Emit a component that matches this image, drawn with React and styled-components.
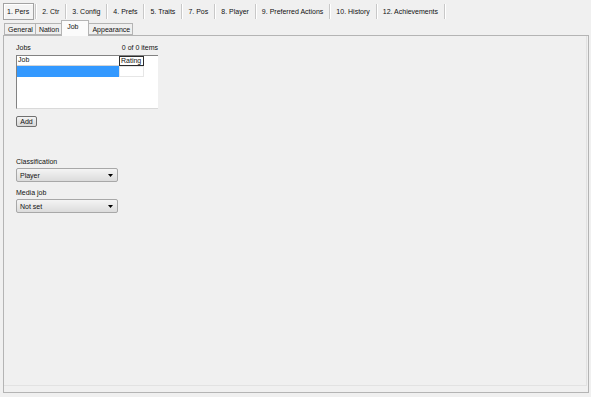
import styled, { createGlobalStyle } from "styled-components";

const GlobalStyle = createGlobalStyle`
  html, body {
    margin: 0;
    padding: 0;
    background: #f0f0f0;
  }
  * {
    box-sizing: border-box;
  }
`;

const Window = styled.div`
  width: 591px;
  height: 397px;
  background: #f0f0f0;
  display: flex;
  flex-direction: column;
  font-family: "Liberation Sans", Arial, sans-serif;
  font-size: 7px;
  color: #111;
  overflow: hidden;
`;

const TopBar = styled.div`
  display: flex;
  align-items: center;
  height: 20px;
  padding: 3px 0 0 3px;
`;

const TopTab = styled.div`
  display: flex;
  align-items: center;
  height: 17px;
  padding: 0 4px 0 3px;
  margin-right: 1px;
  white-space: nowrap;
  border: 1px solid ${(p) => (p.$active ? "#a3a3a3" : "transparent")};
  background: ${(p) => (p.$active ? "#f4f4f4" : "transparent")};
  box-shadow: ${(p) => (p.$active ? "inset 1px 1px 0 #fff" : "none")};
`;

const TopSep = styled.div`
  width: 2px;
  height: 15px;
  margin-right: 1px;
  border-left: 1px solid #c8c8c8;
  border-right: 1px solid #ffffff;
`;

const SubBar = styled.div`
  display: flex;
  align-items: flex-end;
  height: 14px;
  padding-left: 5px;
  margin-top: 1px;
  position: relative;
  z-index: 1;
`;

const SubTab = styled.div`
  display: flex;
  align-items: ${(p) => (p.$active ? "flex-start" : "center")};
  height: ${(p) => (p.$active ? "16px" : "12px")};
  padding: ${(p) => (p.$active ? "2px 10px 0 5px" : "0 2px 0 3px")};
  margin-bottom: ${(p) => (p.$active ? "-1px" : "0")};
  border: 1px solid #b4b4b4;
  border-bottom: ${(p) => (p.$active ? "none" : "1px solid #b4b4b4")};
  margin-left: -1px;
  background: ${(p) => (p.$active ? "#fbfbfb" : "#efefef")};
  white-space: nowrap;
`;

const Panel = styled.div`
  flex: 1;
  margin: 0 2px 4px 3px;
  border: 1px solid #b4b4b4;
  background: #f0f0f0;
  display: flex;
`;

const PanelInner = styled.div`
  flex: 1;
  margin: 0 1px 6px 0;
  border-right: 1px solid #e2e2e2;
  border-bottom: 1px solid #e2e2e2;
  padding: 7px 0 0 12px;
  display: flex;
  flex-direction: column;
  align-items: flex-start;
`;

const ListHeader = styled.div`
  width: 142px;
  display: flex;
  justify-content: space-between;
  line-height: 10px;
  height: 12px;
`;

const ListBox = styled.div`
  width: 142px;
  height: 54px;
  background: #fff;
  border-top: 1px solid #828282;
  border-left: 1px solid #828282;
  border-bottom: 1px solid #d9d9d9;
`;

const Row = styled.div`
  display: flex;
  height: ${(p) => p.$h}px;
`;

const Cell = styled.div`
  width: ${(p) => p.$w}px;
  height: 100%;
  line-height: 8px;
  padding-left: 1px;
  background: ${(p) => p.$bg || "transparent"};
  border: ${(p) => p.$border || "none"};
  border-bottom: ${(p) => p.$bottom || p.$border || "none"};
`;

const Button = styled.div`
  margin-top: 7px;
  width: 21px;
  height: 11px;
  display: flex;
  align-items: center;
  justify-content: center;
  border: 1px solid #707070;
  border-radius: 2px;
  background: linear-gradient(#f4f4f4, #e4e4e4 50%, #d8d8d8);
`;

const FieldLabel = styled.div`
  margin-top: ${(p) => p.$top}px;
  line-height: 9px;
  height: 10px;
`;

const Combo = styled.div`
  margin-top: 1px;
  width: 102px;
  height: 14px;
  display: flex;
  align-items: center;
  justify-content: space-between;
  padding: 0 4px 0 3px;
  border: 1px solid #a8a8a8;
  border-radius: 2px;
  background: linear-gradient(#f4f4f4, #e8e8e8 50%, #dcdcdc);
`;

const Arrow = () => (
  <svg width="5" height="3" viewBox="0 0 5 3">
    <path d="M0 0H5L2.5 3Z" fill="#000" />
  </svg>
);

const topTabs = [
  "1. Pers",
  "2. Ctr",
  "3. Config",
  "4. Prefs",
  "5. Traits",
  "7. Pos",
  "8. Player",
  "9. Preferred Actions",
  "10. History",
  "12. Achievements",
];

const subTabs = ["General", "Nation", "Job", "Appearance"];

export default function App() {
  return (
    <Window>
      <GlobalStyle />
      <TopBar>
        {topTabs.map((t, i) => [
          <TopTab key={t} $active={i === 0}>
            {t}
          </TopTab>,
          <TopSep key={t + "-sep"} />,
        ])}
      </TopBar>
      <SubBar>
        {subTabs.map((t) => (
          <SubTab key={t} $active={t === "Job"}>
            {t}
          </SubTab>
        ))}
      </SubBar>
      <Panel>
        <PanelInner>
          <ListHeader>
            <span>Jobs</span>
            <span>0 of 0 items</span>
          </ListHeader>
          <ListBox>
            <Row $h={10}>
              <Cell $w={102} $bottom="1px solid #d5d5d5">
                Job
              </Cell>
              <Cell $w={25} $border="1px solid #2b2b2b">
                Rating
              </Cell>
            </Row>
            <Row $h={11}>
              <Cell $w={102} $bg="#3399ff" />
              <Cell $w={25} $border="1px solid #e6e6e6" />
            </Row>
          </ListBox>
          <Button>Add</Button>
          <FieldLabel $top={30}>Classification</FieldLabel>
          <Combo>
            <span>Player</span>
            <Arrow />
          </Combo>
          <FieldLabel $top={6}>Media job</FieldLabel>
          <Combo>
            <span>Not set</span>
            <Arrow />
          </Combo>
        </PanelInner>
      </Panel>
    </Window>
  );
}
